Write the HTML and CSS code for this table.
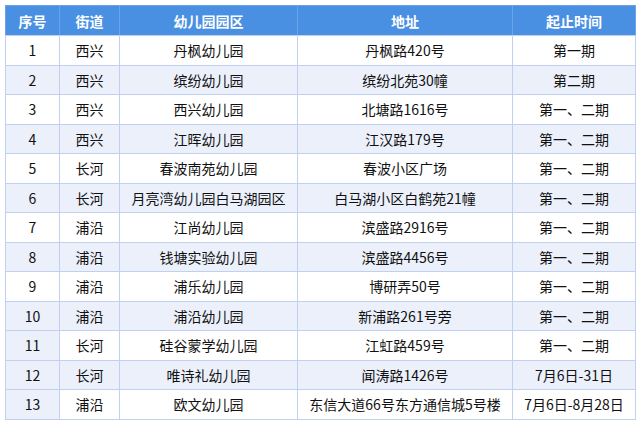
FILE: index.html
```html
<!DOCTYPE html>
<html lang="zh-CN">
<head>
<meta charset="utf-8">
<link rel="stylesheet" href="styles.css">
</head>
<body>
<div class="wrap">
<table class="grid">
<colgroup>
<col class="c1"><col class="c2"><col class="c3"><col class="c4"><col class="c5">
</colgroup>
<thead>
<tr><th>序号</th><th>街道</th><th>幼儿园园区</th><th>地址</th><th>起止时间</th></tr>
</thead>
<tbody>
<tr><td>1</td><td>西兴</td><td>丹枫幼儿园</td><td>丹枫路420号</td><td>第一期</td></tr>
<tr class="alt"><td>2</td><td>西兴</td><td>缤纷幼儿园</td><td>缤纷北苑30幢</td><td>第二期</td></tr>
<tr><td>3</td><td>西兴</td><td>西兴幼儿园</td><td>北塘路1616号</td><td>第一、二期</td></tr>
<tr class="alt"><td>4</td><td>西兴</td><td>江晖幼儿园</td><td>江汉路179号</td><td>第一、二期</td></tr>
<tr><td>5</td><td>长河</td><td>春波南苑幼儿园</td><td>春波小区广场</td><td>第一、二期</td></tr>
<tr class="alt"><td>6</td><td>长河</td><td>月亮湾幼儿园白马湖园区</td><td>白马湖小区白鹤苑21幢</td><td>第一、二期</td></tr>
<tr><td>7</td><td>浦沿</td><td>江尚幼儿园</td><td>滨盛路2916号</td><td>第一、二期</td></tr>
<tr class="alt"><td>8</td><td>浦沿</td><td>钱塘实验幼儿园</td><td>滨盛路4456号</td><td>第一、二期</td></tr>
<tr><td>9</td><td>浦沿</td><td>浦乐幼儿园</td><td>博研弄50号</td><td>第一、二期</td></tr>
<tr class="alt"><td>10</td><td>浦沿</td><td>浦沿幼儿园</td><td>新浦路261号旁</td><td>第一、二期</td></tr>
<tr><td class="tint">11</td><td>长河</td><td>硅谷蒙学幼儿园</td><td>江虹路459号</td><td>第一、二期</td></tr>
<tr class="alt"><td>12</td><td>长河</td><td>唯诗礼幼儿园</td><td>闻涛路1426号</td><td>7月6日-31日</td></tr>
<tr><td class="tint">13</td><td>浦沿</td><td>欧文幼儿园</td><td>东信大道66号东方通信城5号楼</td><td>7月6日-8月28日</td></tr>
</tbody>
</table>
</div>
</body>
</html>
```
FILE: styles.css
```css
html, body {
  margin: 0;
  padding: 0;
  background: #ffffff;
}
.wrap {
  padding: 5px 0 0 5px;
}
.grid {
  border-collapse: collapse;
  table-layout: fixed;
  width: 630px;
  font-family: "Noto Sans CJK SC", "Noto Sans", sans-serif;
  font-size: 14px;
  font-weight: 400;
  color: #111111;
  border: 1px solid #9fb9e8;
}
.c1 { width: 54px; }
.c2 { width: 60px; }
.c3 { width: 178px; }
.c4 { width: 215px; }
.c5 { width: 123px; }
.grid th, .grid td {
  border: 1px solid #bfd0f0;
  text-align: center;
  padding: 0;
  white-space: nowrap;
  line-height: 16px;
}
.grid th {
  background: #4a90e2;
  color: #ffffff;
  font-weight: bold;
  height: 29px;
  border-color: #6aa3e8;
  border-bottom-color: #bfd0f0;
}
.grid td {
  height: 28.5px;
  background: #ffffff;
}
.grid tr.alt td,
.grid td.tint {
  background: #ebf0fb;
}
```
